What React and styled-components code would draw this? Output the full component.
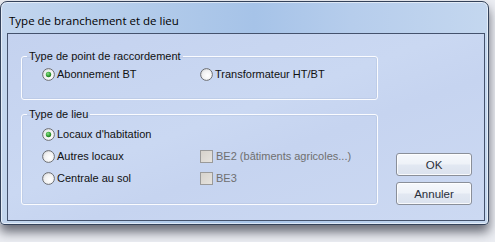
import React from "react";
import styled, { createGlobalStyle } from "styled-components";

const GlobalStyle = createGlobalStyle`
  html, body {
    margin: 0;
    padding: 0;
    width: 495px;
    height: 242px;
    overflow: hidden;
    background: #eceef3;
  }
  * {
    box-sizing: border-box;
  }
`;

const Page = styled.div`
  padding-top: 1px;
  height: 242px;
`;

const Window = styled.div`
  width: 489px;
  height: 224px;
  display: flex;
  flex-direction: column;
  border: 1px solid #34425a;
  border-radius: 7px 7px 4px 4px;
  background: linear-gradient(90deg, #c3d6ee 0%, #b2cbea 30%, #a6c3e8 52%, #b6cdec 72%, #c4d7ef 100%);
  box-shadow: inset 0 0 0 1px rgba(255, 255, 255, 0.55), 0 7px 11px rgba(30, 34, 48, 0.65);
`;

const TitleBar = styled.div`
  height: 31px;
  padding: 6px 0 0 8px;
  display: flex;
  align-items: center;
  font-family: "Open Sans", "Noto Sans", sans-serif;
  font-size: 11.5px;
  color: #000;
`;

const Client = styled.div`
  flex: 1;
  margin: 0 3px 3px 6px;
  display: flex;
  align-items: flex-end;
  padding: 0 0 15px 13px;
  border: 1px solid #44526d;
  background: linear-gradient(160deg, #c4d2ef 0%, #cad8f2 45%, #c6d4f0 60%, #ccd9f2 100%);
  font-family: "Liberation Sans", Tahoma, sans-serif;
  font-size: 11px;
  color: #111;
`;

const Groups = styled.div`
  display: flex;
  flex-direction: column;
  gap: 8px;
  width: 357px;
`;

const Group = styled.fieldset`
  margin: 0;
  padding: 0;
  min-inline-size: 0;
  height: ${(p) => p.$height}px;
  border: 1px solid #fbfcff;
  border-radius: 3px;
  box-shadow: inset 0 0 0 1px rgba(160, 175, 205, 0.25);
`;

const Legend = styled.legend`
  margin-left: 5px;
  padding: 0 2px;
  line-height: 13px;
  font-size: 11px;
`;

const Options = styled.div`
  display: grid;
  grid-template-columns: 158px auto;
  grid-auto-rows: 16px;
  row-gap: 6px;
  padding: ${(p) => p.$top}px 0 0 20px;
`;

const Choice = styled.label`
  display: flex;
  align-items: center;
  gap: ${(p) => (p.$box ? 3 : 2)}px;
  color: ${(p) => (p.$disabled ? "#6f6f6f" : "#111")};
  white-space: nowrap;
`;

const Box = styled.span`
  width: 13px;
  height: 13px;
  flex: none;
  border: 1px solid #9a9a9a;
  background: linear-gradient(135deg, #d6d2cc, #e6e3de);
`;

const Buttons = styled.div`
  display: flex;
  flex-direction: column;
  gap: 6px;
  margin-left: 18px;
`;

const Button = styled.button`
  width: 76px;
  height: 23px;
  padding: 0;
  border: 1px solid #8a8f99;
  border-radius: 3px;
  background: linear-gradient(180deg, #f6f8fc 0%, #eef2f8 48%, #e2e8f2 52%, #dbe2ee 100%);
  box-shadow: inset 0 0 0 1px rgba(255, 255, 255, 0.8);
  font-family: "Liberation Sans", Tahoma, sans-serif;
  font-size: 11.5px;
  color: #2a2f3a;
`;

const Radio = ({ checked }) => (
  <svg width="13" height="13" viewBox="0 0 13 13" style={{ flex: "none" }}>
    <defs>
      <radialGradient id={checked ? "rg1" : "rg0"} cx="0.6" cy="0.6" r="0.7">
        <stop offset="0" stopColor="#ffffff" />
        <stop offset="0.6" stopColor="#f1f1f1" />
        <stop offset="1" stopColor="#cfd1d4" />
      </radialGradient>
      <radialGradient id="dot" cx="0.4" cy="0.35" r="0.7">
        <stop offset="0" stopColor="#8ee08a" />
        <stop offset="0.6" stopColor="#36a236" />
        <stop offset="1" stopColor="#1e6e1e" />
      </radialGradient>
    </defs>
    <circle cx="6.5" cy="6.5" r="5.9" fill={`url(#${checked ? "rg1" : "rg0"})`} stroke="#6b6e73" strokeWidth="1" />
    {checked && <circle cx="6.5" cy="6.5" r="2.7" fill="url(#dot)" />}
  </svg>
);

const Option = ({ checked, children }) => (
  <Choice>
    <Radio checked={checked} />
    {children}
  </Choice>
);

const Check = ({ children }) => (
  <Choice $box $disabled>
    <Box />
    {children}
  </Choice>
);

export default function App() {
  return (
    <>
      <GlobalStyle />
      <Page>
        <Window>
          <TitleBar>Type de branchement et de lieu</TitleBar>
          <Client>
            <Groups>
              <Group $height={50}>
                <Legend>Type de point de raccordement</Legend>
                <Options $top={3}>
                  <Option checked>Abonnement BT</Option>
                  <Option>Transformateur HT/BT</Option>
                </Options>
              </Group>
              <Group $height={97}>
                <Legend>Type de lieu</Legend>
                <Options $top={5}>
                  <Option checked>Locaux d'habitation</Option>
                  <span />
                  <Option>Autres locaux</Option>
                  <Check>BE2 (bâtiments agricoles...)</Check>
                  <Option>Centrale au sol</Option>
                  <Check>BE3</Check>
                </Options>
              </Group>
            </Groups>
            <Buttons>
              <Button>OK</Button>
              <Button>Annuler</Button>
            </Buttons>
          </Client>
        </Window>
      </Page>
    </>
  );
}
